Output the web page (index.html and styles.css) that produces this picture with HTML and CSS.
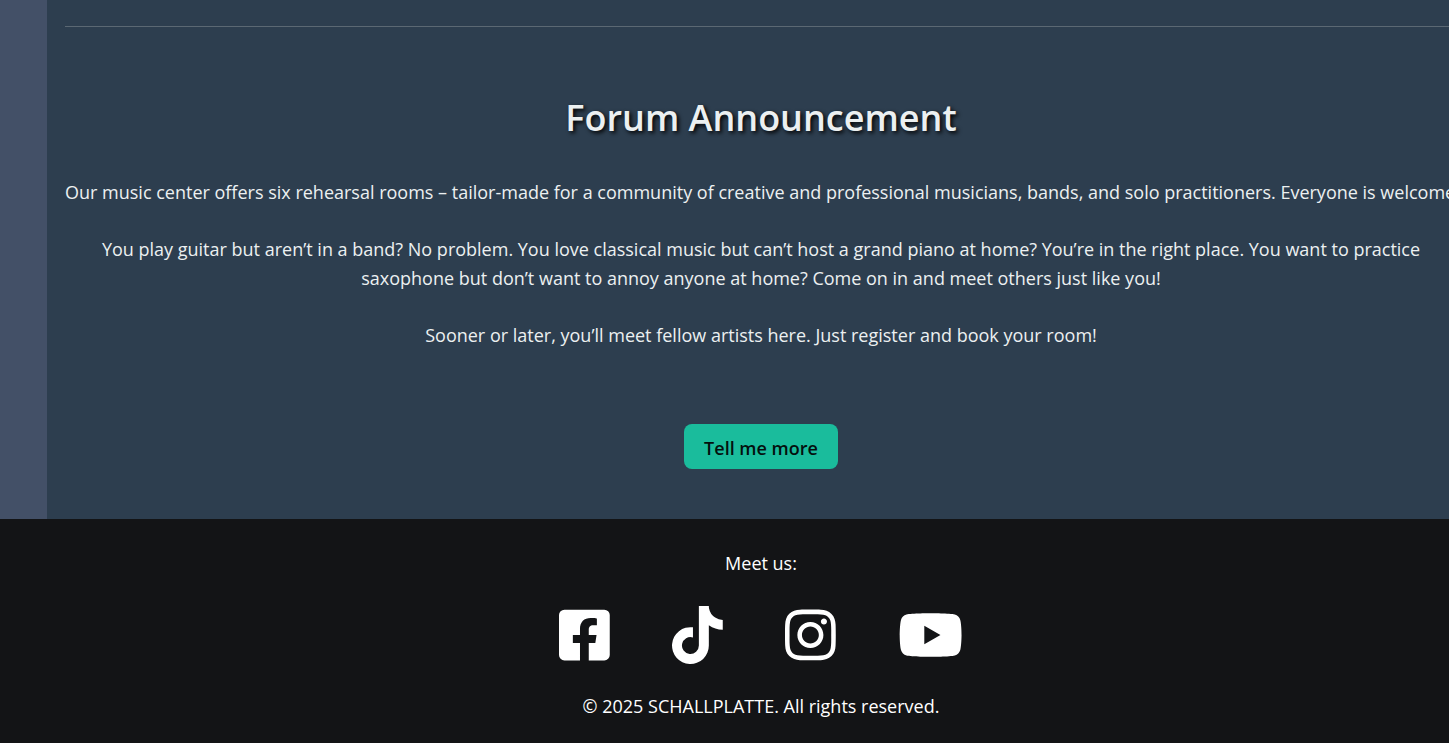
FILE: index.html
```html
<!DOCTYPE html>
<html lang="en">
<head>
<meta charset="utf-8">
<meta name="viewport" content="width=device-width, initial-scale=1">
<title>Schallplatte</title>
<link rel="stylesheet" href="styles.css">
</head>
<body>
<div class="page">
  <main class="content">
    <hr class="divider">
    <section class="announcement">
      <h2 class="title">Forum Announcement</h2>
      <p class="text">Our music center offers six rehearsal rooms – tailor-made for a community of creative and professional musicians, bands, and solo practitioners. Everyone is welcome.</p>
      <p class="text">You play guitar but aren’t in a band? No problem. You love classical music but can’t host a grand piano at home? You’re in the right place. You want to practice<br>saxophone but don’t want to annoy anyone at home? Come on in and meet others just like you!</p>
      <p class="text">Sooner or later, you’ll meet fellow artists here. Just register and book your room!</p>
      <button class="button" type="button">Tell me more</button>
    </section>
  </main>
  <footer class="footer">
    <p class="footer-text">Meet us:</p>
    <nav class="social" aria-label="Social media">
      <a class="social-link" href="#" aria-label="Facebook"><svg class="icon" viewBox="0 0 448 512"><path d="M400 32H48A48 48 0 0 0 0 80v352a48 48 0 0 0 48 48h137.25V327.69h-63V256h63v-54.64c0-62.15 37-96.48 93.67-96.48 27.14 0 55.52 4.84 55.52 4.84v61h-31.27c-30.81 0-40.42 19.12-40.42 38.73V256h68.78l-11 71.69h-57.78V480H400a48 48 0 0 0 48-48V80a48 48 0 0 0-48-48z"/></svg></a>
      <a class="social-link" href="#" aria-label="TikTok"><svg class="icon" viewBox="0 0 448 512"><path d="M448 209.91a210.06 210.06 0 0 1-122.77-39.25v178.72A162.55 162.55 0 1 1 185 188.31v89.89a74.62 74.62 0 1 0 52.23 71.18V0h88a121.18 121.18 0 0 0 1.86 22.17A122.18 122.18 0 0 0 381 102.39a121.43 121.43 0 0 0 67 20.14z"/></svg></a>
      <a class="social-link" href="#" aria-label="Instagram"><svg class="icon" viewBox="0 0 448 512"><path d="M224.1 141c-63.6 0-114.9 51.3-114.9 114.9s51.3 114.9 114.9 114.9S339 319.5 339 255.9 287.7 141 224.1 141zm0 189.6c-41.1 0-74.7-33.5-74.7-74.7s33.5-74.7 74.7-74.7 74.7 33.5 74.7 74.7-33.6 74.7-74.7 74.7zm146.4-194.3c0 14.9-12 26.8-26.8 26.8-14.9 0-26.8-12-26.8-26.8s12-26.8 26.8-26.8 26.8 12 26.8 26.8zm76.1 27.2c-1.7-35.9-9.9-67.7-36.2-93.9-26.2-26.2-58-34.4-93.9-36.2-37-2.1-147.9-2.1-184.9 0-35.8 1.7-67.6 9.9-93.9 36.1s-34.4 58-36.2 93.9c-2.1 37-2.1 147.9 0 184.9 1.7 35.9 9.9 67.7 36.2 93.9s58 34.4 93.9 36.2c37 2.1 147.9 2.1 184.9 0 35.9-1.7 67.7-9.9 93.9-36.2 26.2-26.2 34.4-58 36.2-93.9 2.1-37 2.1-147.8 0-184.8zM398.8 388c-7.8 19.6-22.9 34.7-42.6 42.6-29.5 11.7-99.5 9-132.1 9s-102.7 2.6-132.1-9c-19.6-7.8-34.7-22.9-42.6-42.6-11.7-29.5-9-99.5-9-132.1s-2.6-102.7 9-132.1c7.8-19.6 22.9-34.7 42.6-42.6 29.5-11.7 99.5-9 132.1-9s102.7-2.6 132.1 9c19.6 7.8 34.7 22.9 42.6 42.6 11.7 29.5 9 99.5 9 132.1s2.7 102.7-9 132.1z"/></svg></a>
      <a class="social-link" href="#" aria-label="YouTube"><svg class="icon" viewBox="0 0 576 512"><path d="M549.655 124.083c-6.281-23.65-24.787-42.276-48.284-48.597C458.781 64 288 64 288 64S117.22 64 74.629 75.486c-23.497 6.322-42.003 24.947-48.284 48.597-11.412 42.867-11.412 132.305-11.412 132.305s0 89.438 11.412 132.305c6.281 23.65 24.787 41.5 48.284 47.821C117.22 448 288 448 288 448s170.78 0 213.371-11.486c23.497-6.321 42.003-24.171 48.284-47.821 11.412-42.867 11.412-132.305 11.412-132.305s0-89.438-11.412-132.305zm-317.51 213.508V175.185l142.739 81.205-142.739 81.201z"/></svg></a>
    </nav>
    <p class="footer-text">© 2025 SCHALLPLATTE. All rights reserved.</p>
  </footer>
</div>
</body>
</html>
```
FILE: styles.css
```css
html {
  overflow: hidden;
}

body {
  margin: 0;
  background: #131416;
  color: #ecf0f1;
  font-family: "Segoe UI", "Open Sans", "Noto Sans", sans-serif;
  font-size: 18px;
  line-height: 29px;
}

/* The layout is wider than the window and runs off its right edge. */
.page {
  margin-right: -73px;
  background: #435067;
}

.content {
  margin: 0 47px;
  padding: 26px 18px 50px;
  background: #2d3e4f;
}

.divider {
  margin: 0;
  border: 0;
  border-top: 1px solid #5b6873;
}

.announcement {
  padding-top: 64px;
  text-align: center;
}

.title {
  margin: 0 0 33px;
  font-size: 36px;
  font-weight: 600;
  line-height: 54px;
  text-shadow: 2px 2px 4px #000000;
}

.text {
  margin: 0 0 28px;
  white-space: nowrap;
}

.button {
  margin-top: 46px;
  padding: 10px 20px 6px;
  border: 0;
  border-radius: 8px;
  background: #1abc9c;
  color: #04100e;
  font: inherit;
  font-weight: 600;
  vertical-align: top;
}

.footer {
  display: flex;
  flex-direction: column;
  align-items: center;
  gap: 28px;
  padding: 30px 0 22px;
  background: #131416;
  color: #ffffff;
}

.footer-text {
  margin: 0;
}

.social {
  display: flex;
  gap: 62px;
}

.social-link {
  display: flex;
  color: inherit;
}

.icon {
  height: 58px;
  fill: currentColor;
}
```
